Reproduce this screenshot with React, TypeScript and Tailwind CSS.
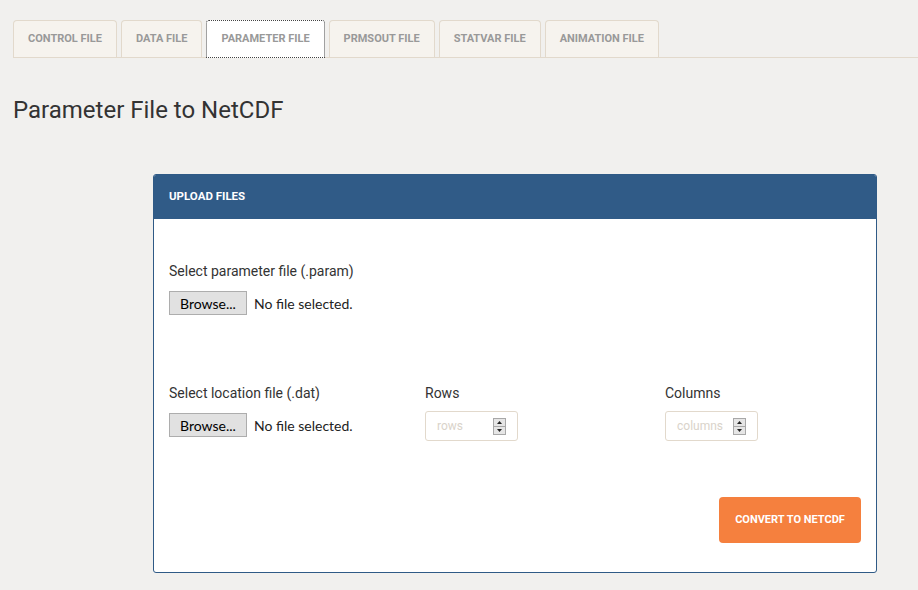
import type React from "react"

const tabs = ["CONTROL FILE", "DATA FILE", "PARAMETER FILE", "PRMSOUT FILE", "STATVAR FILE", "ANIMATION FILE"]

const Spinner: React.FC = () => (
  <div className="flex h-[17px] w-[13px] flex-col border border-[#a8a8a8] bg-[#e6e6e6]">
    <div className="flex flex-1 items-center justify-center border-b border-[#a8a8a8]">
      <svg width="5" height="3" viewBox="0 0 5 3"><path d="M2.5 0L5 3H0z" fill="#222" /></svg>
    </div>
    <div className="flex flex-1 items-center justify-center">
      <svg width="5" height="3" viewBox="0 0 5 3"><path d="M0 0h5L2.5 3z" fill="#222" /></svg>
    </div>
  </div>
)

const NumberBox: React.FC<{ placeholder: string }> = ({ placeholder }) => (
  <div className="flex h-[30px] w-[93px] items-center justify-between rounded-[3px] border border-[#e2d9cc] bg-white pl-[11px] pr-[11px]">
    <span className="text-[12px] text-[#d9d3ca]">{placeholder}</span>
    <Spinner />
  </div>
)

const FilePicker: React.FC = () => (
  <div className="flex items-center gap-[7px]">
    <div className="flex h-[24px] w-[78px] items-center justify-center border border-[#adadad] bg-[#e1e1e1] text-[14px] text-black [font-family:Lato,'Noto_Sans',sans-serif]">
      Browse...
    </div>
    <span className="text-[14px] text-[#222] [font-family:Lato,'Noto_Sans',sans-serif]">No file selected.</span>
  </div>
)

export default function App() {
  return (
    <div className="min-h-[590px] w-[918px] bg-[#f1f0ee] [font-family:Roboto,'Liberation_Sans',sans-serif] text-[#333]">
      <div className="ml-[13px] flex gap-[4px] border-b border-[#e2d9cc] pt-[20px]">
        {tabs.map((t, i) =>
          i === 2 ? (
            <div
              key={t}
              className="-mb-px flex h-[38px] items-center rounded-t-[3px] border border-dotted border-[#444] bg-white px-[14px] text-[11px] font-bold text-[#999]"
            >
              {t}
            </div>
          ) : (
            <div
              key={t}
              className="flex h-[37px] items-center rounded-t-[4px] border border-b-0 border-[#e2d9cc] bg-[#f6f3ee] px-[14px] text-[11px] font-bold text-[#999]"
            >
              {t}
            </div>
          )
        )}
      </div>

      <h1 className="ml-[13px] mt-[38px] text-[24px] leading-[28px] text-[#333]">Parameter File to NetCDF</h1>

      <div className="ml-[153px] mt-[50px] w-[724px] overflow-hidden rounded-[3px] border border-[#2f5a86] bg-white">
        <div className="flex h-[44px] items-center bg-[#305b87] px-[15px] text-[11.5px] font-bold text-white">
          UPLOAD FILES
        </div>
        <div className="px-[15px] pb-[29px] pt-[42px]">
          <div className="text-[14px] leading-[20px]">Select parameter file (.param)</div>
          <div className="mt-[10px]">
            <FilePicker />
          </div>

          <div className="mt-[68px] grid grid-cols-[256px_240px_1fr]">
            <div>
              <div className="text-[14px] leading-[20px]">Select location file (.dat)</div>
              <div className="mt-[10px]">
                <FilePicker />
              </div>
            </div>
            <div>
              <div className="text-[14px] leading-[20px]">Rows</div>
              <div className="mt-[8px]">
                <NumberBox placeholder="rows" />
              </div>
            </div>
            <div>
              <div className="text-[14px] leading-[20px]">Columns</div>
              <div className="mt-[8px]">
                <NumberBox placeholder="columns" />
              </div>
            </div>
          </div>

          <div className="mt-[56px] flex justify-end">
            <div className="flex h-[46px] w-[142px] items-center justify-center rounded-[4px] bg-[#f5803e] text-[11px] font-bold text-white">
              CONVERT TO NETCDF
            </div>
          </div>
        </div>
      </div>
    </div>
  )
}
